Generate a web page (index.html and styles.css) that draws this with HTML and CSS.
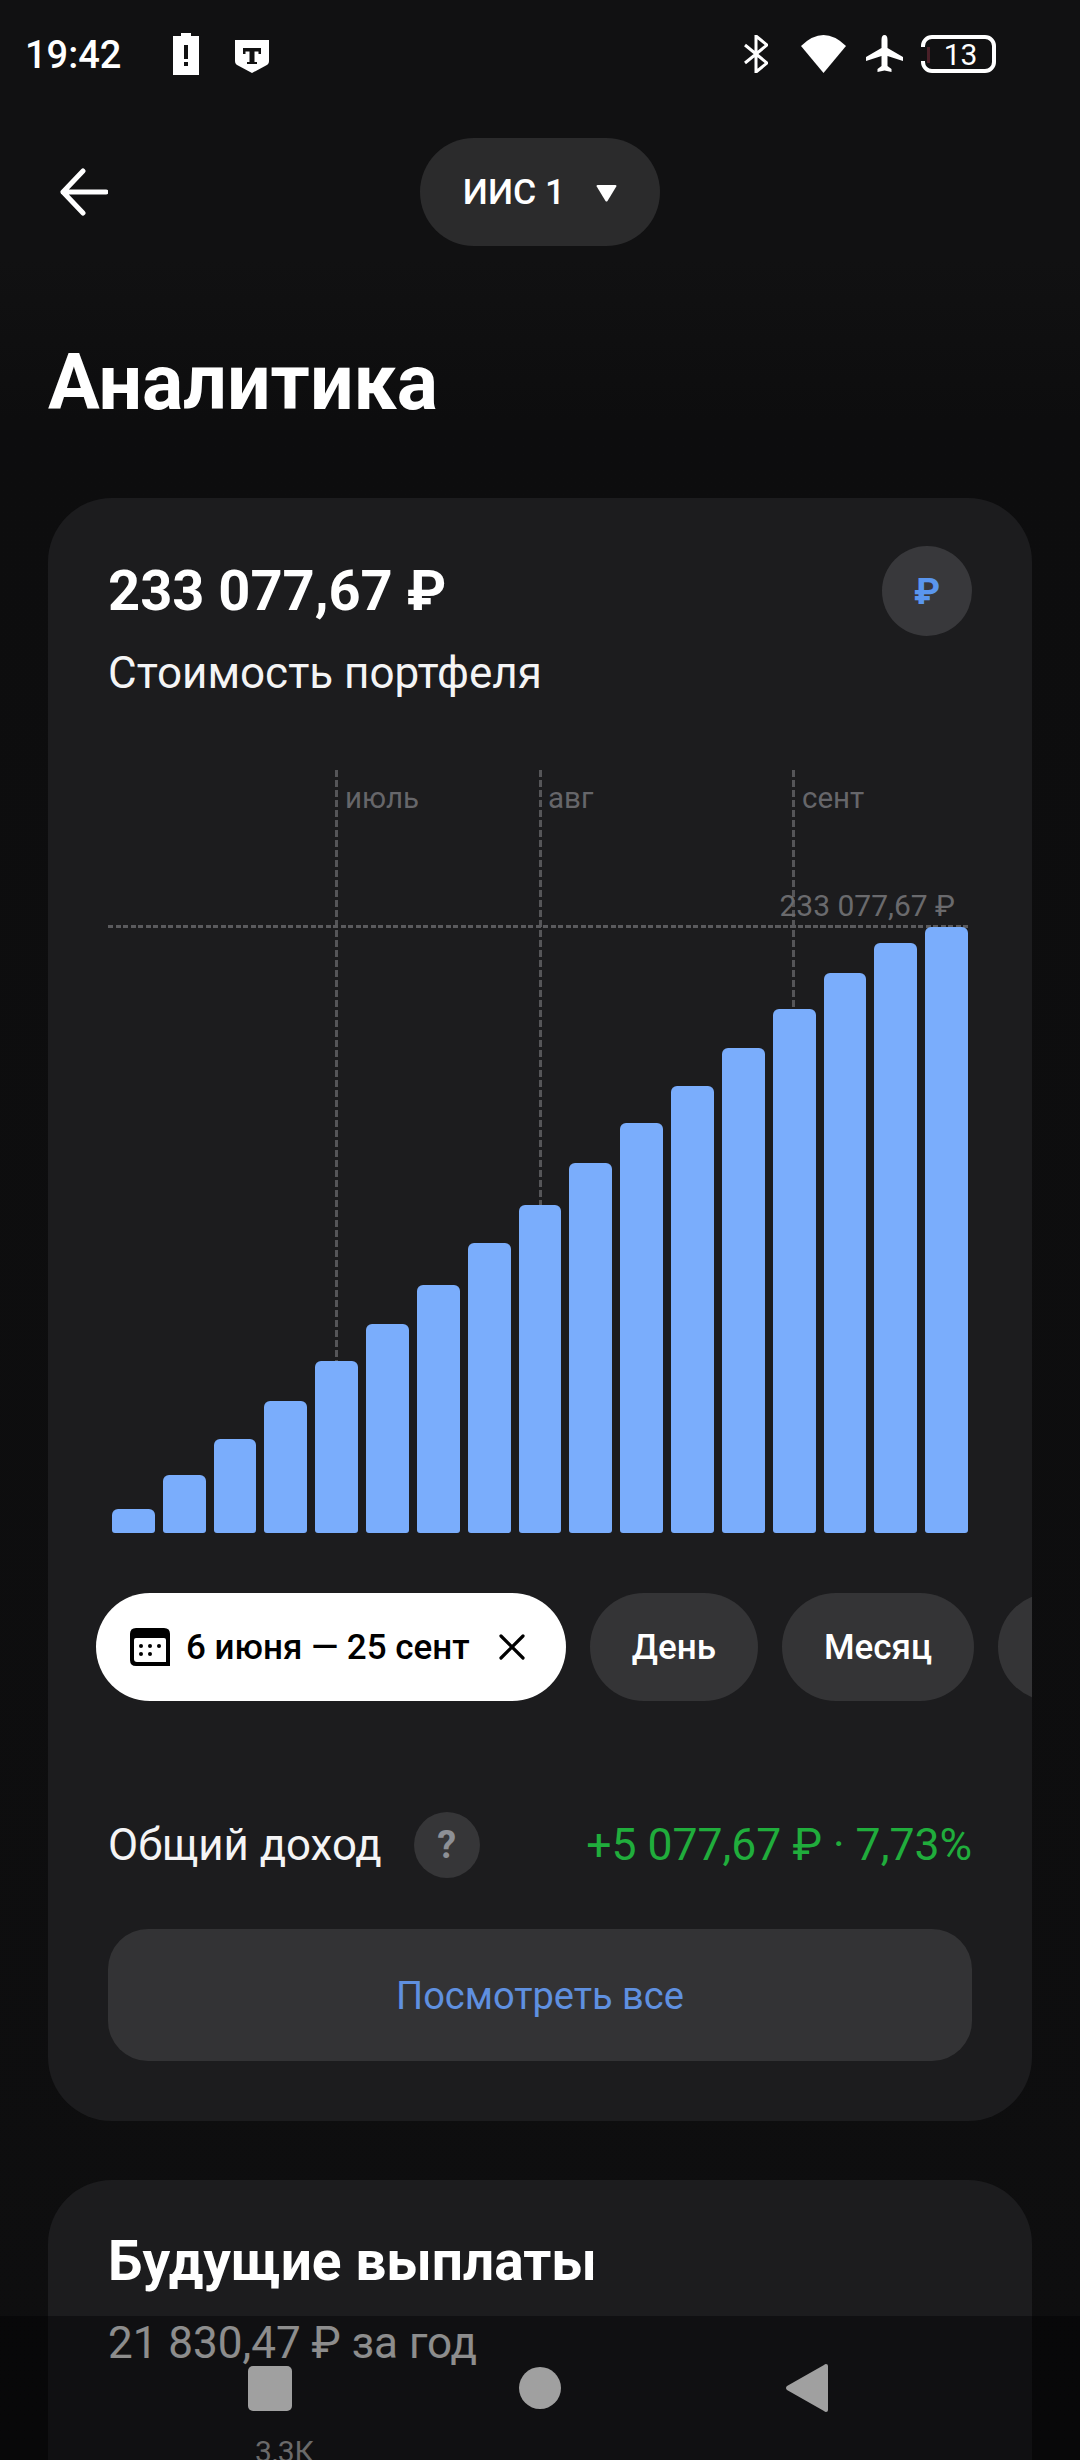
FILE: index.html
```html
<!DOCTYPE html>
<html lang="ru">
<head>
<meta charset="utf-8">
<title>Аналитика</title>
<link rel="stylesheet" href="styles.css">
</head>
<body>
<div class="page">
  <div class="status">
    <span class="time">19:42</span>
    <svg class="ic-batt" viewBox="0 0 26 42"><path fill="#fff" d="M8 0h10v3h8v39H0V3h8z"/><rect x="11" y="12" width="4" height="14" fill="#111"/><rect x="11" y="29" width="4" height="4" fill="#111"/></svg>
    <svg class="ic-shield" viewBox="0 0 34 33"><path fill="#fff" d="M0 0h34v21q0 3-3 4.500L17 33 3 25.500Q0 24 0 21z"/><path fill="#111" d="M8 8h18v6h-2.500v-2.500H19.500V22H22v2H12v-2h2.500V11.500H10.500V14H8z"/></svg>
    <span class="status-gap"></span>
    <svg class="ic-bt" viewBox="0 0 24 38"><path fill="none" stroke="#fff" stroke-width="3" d="M1 10l22 18-11 9V1l11 9L1 28"/></svg>
    <svg class="ic-wifi" viewBox="0 0 45 38"><path fill="#fff" d="M0 11Q22.500-11 45 11L22.500 38z"/></svg>
    <svg class="ic-plane" viewBox="0 0 37 38"><path fill="#fff" d="M18.500 0q3 0 3 5v8l15.500 9v4l-15.500-5v10l4 3v3l-7-1.500-7 1.500v-3l4-3V21L0 26v-4l15.500-9V5q0-5 3-5z"/></svg>
    <span class="batt"><i class="batt-sliver"></i>13</span>
  </div>

  <div class="topbar">
    <svg class="ic-back" viewBox="0 0 48 48"><path fill="none" stroke="#fff" stroke-width="5" stroke-linecap="round" stroke-linejoin="round" d="M46 24H3M23 3 3 24l20 21"/></svg>
    <div class="pill">
      <span>ИИС 1</span>
      <svg class="ic-caret" viewBox="0 0 21 17"><path fill="#fff" d="M1.500 0h18q1.500 0 .8 1.500L11.500 16q-1 1-2 0L.7 1.500Q0 0 1.500 0z"/></svg>
    </div>
  </div>

  <h1 class="title">Аналитика</h1>

  <section class="card card-main">
    <div class="head">
      <div class="value value-total">233 077,67 ₽</div>
      <div class="round-ic">₽</div>
    </div>
    <div class="sub">Стоимость портфеля</div>

    <div class="chart">
      <i class="vline v1"></i><i class="vline v2"></i><i class="vline v3"></i>
      <span class="month m1">июль</span><span class="month m2">авг</span><span class="month m3">сент</span>
      <i class="hline"></i>
      <span class="max">233 077,67 ₽</span>
      <div class="bars">
        <i class="bar" style="height:24px"></i>
        <i class="bar" style="height:58px"></i>
        <i class="bar" style="height:94px"></i>
        <i class="bar" style="height:132px"></i>
        <i class="bar" style="height:172px"></i>
        <i class="bar" style="height:209px"></i>
        <i class="bar" style="height:248px"></i>
        <i class="bar" style="height:290px"></i>
        <i class="bar" style="height:328px"></i>
        <i class="bar" style="height:370px"></i>
        <i class="bar" style="height:410px"></i>
        <i class="bar" style="height:447px"></i>
        <i class="bar" style="height:485px"></i>
        <i class="bar" style="height:524px"></i>
        <i class="bar" style="height:560px"></i>
        <i class="bar" style="height:590px"></i>
        <i class="bar" style="height:606px"></i>
      </div>
    </div>

    <div class="chips">
      <div class="chip chip-on">
        <svg class="ic-cal" viewBox="0 0 40 38"><path fill="#000" d="M6 0h28q6 0 6 6v32H6q-6 0-6-6V6q0-6 6-6z"/><path fill="#fff" d="M6 10h28q2 0 2 2v22H7q-3 0-3-3V12q0-2 2-2z"/><circle cx="11" cy="18" r="2" fill="#000"/><circle cx="20" cy="18" r="2" fill="#000"/><circle cx="29" cy="18" r="2" fill="#000"/><circle cx="11" cy="26" r="2" fill="#000"/><circle cx="20" cy="26" r="2" fill="#000"/></svg>
        <span class="chip-date">6 июня — 25 сент</span>
        <svg class="ic-x" viewBox="0 0 26 26"><path fill="none" stroke="#000" stroke-width="3.200" stroke-linecap="round" d="M2 2l22 22M24 2 2 24"/></svg>
      </div>
      <div class="chip">День</div>
      <div class="chip">Месяц</div>
      <div class="chip chip-more"></div>
    </div>

    <div class="income">
      <span class="income-label">Общий доход</span>
      <span class="help">?</span>
      <span class="income-val">+5 077,67 ₽ · 7,73%</span>
    </div>

    <div class="btn">Посмотреть все</div>
  </section>

  <section class="card card-next">
    <div class="value">Будущие выплаты</div>
    <div class="sub sub-next">21 830,47 ₽ за год</div>
  </section>

  <div class="navbar">
    <div class="nav-icons">
      <i class="nav-square"></i>
      <i class="nav-circle"></i>
      <svg class="nav-tri" viewBox="0 0 42 48"><path fill="#a0a0a0" d="M40 0q2 0 2 2v44q0 2-2 2-1 0-2-1L1 26q-2-2 0-4L38 1q1-1 2-1z"/></svg>
    </div>
    <div class="nav-count">3,3К</div>
  </div>
</div>
</body>
</html>
```
FILE: styles.css
```css
* { box-sizing: border-box; margin: 0; padding: 0; }
html, body { width: 1080px; height: 2460px; overflow: hidden; background: #0e0e0f; }
body { font-family: Roboto, "Noto Sans", sans-serif; color: #fff; }
.page { position: relative; width: 1080px; height: 2460px; overflow: hidden; background: linear-gradient(#111112 0, #111112 260px, #0d0d0e 420px, #0e0e0f 100%); }

.status { display: flex; align-items: center; height: 108px; padding: 0 84px 0 25px; }
.time { font-size: 38px; font-weight: 500; width: 148px; padding-top: 2px; }
.ic-batt { width: 26px; height: 42px; flex: none; }
.ic-shield { width: 34px; height: 33px; flex: none; margin-left: 36px; margin-top: 4px; }
.status-gap { flex: 1; }
.ic-bt { width: 24px; height: 38px; flex: none; }
.ic-wifi { width: 45px; height: 38px; flex: none; margin-left: 33px; }
.ic-plane { width: 37px; height: 38px; flex: none; margin-left: 20px; }
.batt { position: relative; display: flex; align-items: center; justify-content: center; width: 75px; height: 38px; margin-left: 18px; border: 4px solid #fff; border-radius: 11px; font-size: 30px; padding-left: 4px; }
.batt-sliver { position: absolute; left: -4px; top: 8px; width: 6px; height: 14px; background: #111112; }
.batt-sliver::after { content: ""; position: absolute; left: 6px; top: 0; width: 3px; height: 16px; background: #4a2028; }

.topbar { display: flex; align-items: center; height: 108px; margin-top: 30px; padding-left: 60px; }
.ic-back { width: 48px; height: 48px; flex: none; }
.pill { display: flex; align-items: center; justify-content: center; gap: 31px; width: 240px; height: 108px; margin-left: 312px; border-radius: 54px; background: #2b2b2c; font-size: 35.500px; font-weight: 500; }
.ic-caret { width: 21px; height: 17px; flex: none; margin-top: 2px; }

.title { font-size: 77px; font-weight: 700; line-height: 90px; margin: 92px 0 0 48px; }

.card { margin: 0 48px; background: #1c1c1e; border-radius: 64px; padding: 0 60px; overflow: hidden; }
.card-main { margin-top: 70px; padding-bottom: 60px; }
.card-next { height: 400px; margin-top: 59px; padding-top: 47px; }

.head { display: flex; justify-content: space-between; align-items: center; height: 90px; margin-top: 48px; }
.value { font-size: 55px; font-weight: 700; line-height: 68px; }
.value-total { font-size: 56px; }
.round-ic { display: flex; align-items: center; justify-content: center; width: 90px; height: 90px; border-radius: 50%; background: #38383b; color: #5a96ee; font-size: 37px; font-weight: 700; }
.sub { font-size: 44px; line-height: 52px; margin-top: 11px; color: #f4f4f5; }
.sub-next { margin-top: 22px; color: #ececec; }

.chart { position: relative; height: 763px; margin-top: 71px; }
.vline { position: absolute; top: 0; bottom: 0; width: 3px; background: repeating-linear-gradient(#555558 0 7px, transparent 7px 10px); }
.v1 { left: 227px; }
.v2 { left: 431px; }
.v3 { left: 684px; }
.month { position: absolute; top: 10px; font-size: 29.500px; line-height: 36px; color: #66666a; }
.m1 { left: 237px; }
.m2 { left: 440px; }
.m3 { left: 694px; }
.hline { position: absolute; left: 0; right: 4px; top: 155px; height: 3px; background: repeating-linear-gradient(90deg, #5a5a5d 0 5px, transparent 5px 7.500px); }
.max { position: absolute; right: 17px; top: 118px; font-size: 30px; line-height: 36px; color: #6a6a6d; }
.bars { position: absolute; left: 4px; right: 4px; bottom: 0; display: flex; align-items: flex-end; gap: 8px; }
.bar { flex: 1; background: #7aadfc; border-radius: 6px 6px 3px 3px; }

.chips { display: flex; gap: 24px; margin: 60px 0 0 -12px; width: 1000px; }
.chip { display: flex; align-items: center; height: 108px; padding: 0 42px; border-radius: 54px; background: #343436; font-size: 35px; font-weight: 500; flex: none; }
.chip-on { background: #fff; color: #000; padding: 0 41px 0 34px; }
.chip-date { margin: 0 29px 0 16px; font-size: 35px; font-weight: 500; }
.chip-more { width: 120px; }
.ic-cal { width: 40px; height: 38px; flex: none; }
.ic-x { width: 26px; height: 26px; flex: none; }

.income { display: flex; align-items: center; height: 66px; margin-top: 111px; }
.income-label { font-size: 43.800px; color: #f4f4f5; }
.help { display: flex; align-items: center; justify-content: center; width: 66px; height: 66px; margin-left: 32px; border-radius: 50%; background: #363638; color: #8d9096; font-size: 38px; font-weight: 700; }
.income-val { margin-left: auto; font-size: 44.500px; color: #20ad3c; }

.btn { display: flex; align-items: center; justify-content: center; height: 132px; margin-top: 51px; padding-top: 2px; border-radius: 40px; background: #333335; color: #5f90e0; font-size: 38px; }

.navbar { position: absolute; left: 0; right: 0; bottom: 0; height: 144px; background: rgba(0, 0, 0, 0.4); }
.nav-icons { display: flex; align-items: center; height: 48px; margin-top: 48px; padding-left: 248px; }
.nav-square { width: 44px; height: 45px; border-radius: 5px; background: #a0a0a0; }
.nav-circle { width: 42px; height: 42px; margin-left: 227px; border-radius: 50%; background: #a0a0a0; }
.nav-tri { width: 42px; height: 48px; margin-left: 225px; }
.nav-count { margin: 22px 0 0 255px; font-size: 30px; line-height: 36px; color: #6a6a6a; }
```
